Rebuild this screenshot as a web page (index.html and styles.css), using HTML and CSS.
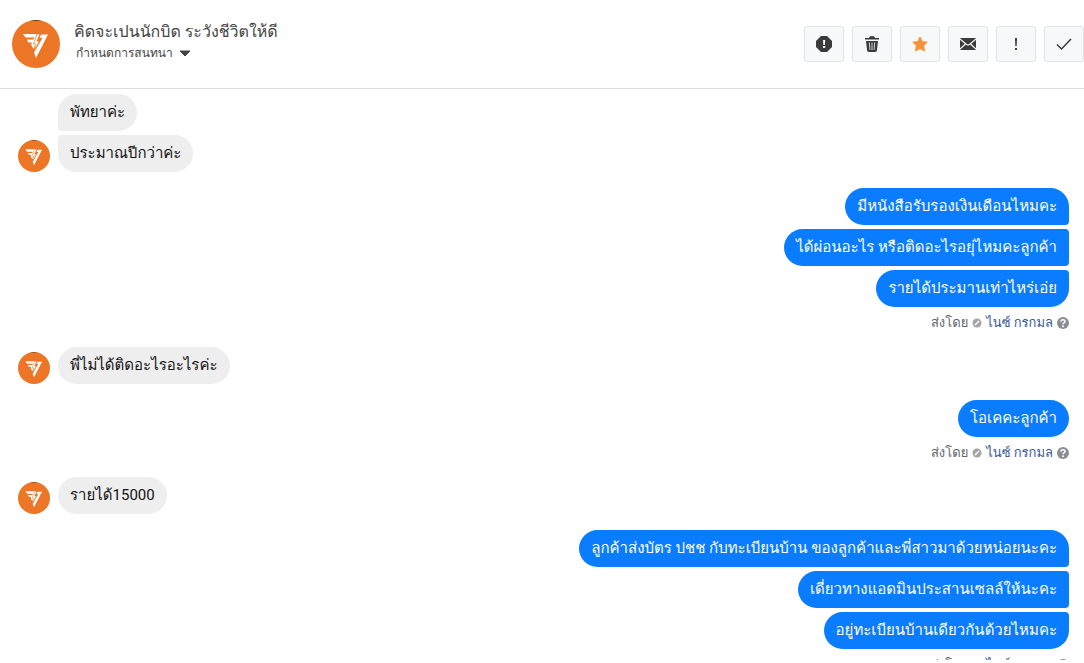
FILE: index.html
```html
<!DOCTYPE html>
<html lang="th">
<head>
    <meta charset="UTF-8">
    <meta name="viewport" content="width=device-width, initial-scale=1.0">
    <title>คิดจะเปนนักบิด ระวังชีวิตให้ดี</title>
    <link rel="stylesheet" href="styles.css">
</head>
<body>
    <!-- shared shapes -->
    <svg class="symbols" aria-hidden="true">
        <symbol id="logo" viewBox="0 0 48 48">
            <circle cx="24" cy="24" r="24" fill="#ec7526"/>
            <path d="M18 .8a24 24 0 0 1 12 0z" fill="#33231a"/>
            <path d="M11 14H27L24.500 22L21.500 29L19 24.500L20 22.500H16.500L14.500 19.500H21.500L22.200 17.500H13.500z" fill="#fff"/>
            <path d="M29 14.500H36L24 38L22 32.500L30.500 18H27.500z" fill="#fff"/>
            <path d="M28 14L25 21H27.500L22 31.500L23.500 24H21.500L25 14z" fill="#fff" stroke="#ec7526" stroke-width=".7"/>
        </symbol>
        <symbol id="help" viewBox="0 0 12 12">
            <circle cx="6" cy="6" r="6" fill="#8a8d91"/>
            <path d="M4 4.600C4 2.200 8 2.200 8 4.500C8 6 6 5.800 6 7.200" fill="none" stroke="#fff" stroke-width="1.600"/>
            <circle cx="6" cy="9.200" r="1" fill="#fff"/>
        </symbol>
        <symbol id="app" viewBox="0 0 10 10">
            <circle cx="5" cy="5" r="4.500" fill="#a5a5a5"/>
            <path d="M3 7L7 3" stroke="#fff" stroke-width="1.500"/>
        </symbol>
    </svg>

    <div class="app">
        <header class="header">
            <svg class="logo"><use href="#logo"/></svg>
            <div class="info">
                <h1>คิดจะเปนนักบิด ระวังชีวิตให้ดี</h1>
                <button type="button" class="assign">กำหนดการสนทนา
                    <svg width="12" height="7" viewBox="0 0 12 7"><path d="M1 1H11L6 6z" fill="#444" stroke="#444" stroke-linejoin="round"/></svg>
                </button>
            </div>
            <div class="actions">
                <button type="button" aria-label="สแปม">
                    <svg viewBox="0 0 16 16"><path d="M5 0H11L16 5V11L11 16H5L0 11V5z"/><path d="M7 4H9.200L8.800 9H7.400zM7 10H9.200V12H7z" fill="#fff"/></svg>
                </button>
                <button type="button" aria-label="ลบ">
                    <svg viewBox="0 0 16 16"><path d="M1 2H5Q5 0 8 0T11 2H15V3.500H1zM2 5H14L13 14Q13 16 11 16H5Q3 16 3 14z"/><path d="M5.300 6.500L6 14M8 6.500V14M10.700 6.500L10 14" stroke="#d5d5d5"/></svg>
                </button>
                <button type="button" aria-label="ติดดาว">
                    <svg viewBox="0 0 16 16"><path d="M8 1L10.200 5.600L15.200 6.200L11.600 9.700L12.500 15L8 12.500L3.500 15L4.400 9.700L.8 6.200L5.800 5.600z" fill="#f7923b" stroke="#f7923b" stroke-linejoin="round"/></svg>
                </button>
                <button type="button" aria-label="ยังไม่ได้อ่าน">
                    <svg viewBox="0 0 16 16"><rect y="2" width="16" height="12" rx="1"/><path d="M0 3L6.500 8.500Q8 9.500 9.500 8.500L16 3M0 13L5.500 8M16 13L10.500 8" fill="none" stroke="#f5f6f7" stroke-width="1.200"/></svg>
                </button>
                <button type="button" aria-label="ติดตาม">
                    <svg viewBox="0 0 16 16"><path d="M7 2H9L8.700 10H7.300zM7 12H9V14H7z"/></svg>
                </button>
                <button type="button" aria-label="เสร็จสิ้น">
                    <svg viewBox="0 0 16 16"><path d="M1 8.500L5.500 13L15 3" fill="none" stroke="#3b3b3b" stroke-width="1.500"/></svg>
                </button>
            </div>
        </header>

        <main class="chat">
            <section class="group received">
                <svg class="avatar"><use href="#logo"/></svg>
                <div class="messages">
                    <p class="bubble">พัทยาค่ะ</p>
                    <p class="bubble">ประมาณปีกว่าค่ะ</p>
                </div>
            </section>

            <section class="group sent">
                <div class="messages">
                    <p class="bubble">มีหนังสือรับรองเงินเดือนไหมคะ</p>
                    <p class="bubble">ได้ผ่อนอะไร หรือติดอะไรอยุ่ไหมคะลูกค้า</p>
                    <p class="bubble">รายได้ประมานเท่าไหร่เอ่ย</p>
                </div>
                <div class="meta">ส่งโดย <svg class="app-icon"><use href="#app"/></svg> <a href="#">ไนซ์ กรกมล</a> <svg class="help-icon"><use href="#help"/></svg></div>
            </section>

            <section class="group received">
                <svg class="avatar"><use href="#logo"/></svg>
                <div class="messages">
                    <p class="bubble">พี่ไม่ได้ติดอะไรอะไรค่ะ</p>
                </div>
            </section>

            <section class="group sent">
                <div class="messages">
                    <p class="bubble">โอเคคะลูกค้า</p>
                </div>
                <div class="meta">ส่งโดย <svg class="app-icon"><use href="#app"/></svg> <a href="#">ไนซ์ กรกมล</a> <svg class="help-icon"><use href="#help"/></svg></div>
            </section>

            <section class="group received">
                <svg class="avatar"><use href="#logo"/></svg>
                <div class="messages">
                    <p class="bubble">รายได้15000</p>
                </div>
            </section>

            <section class="group sent">
                <div class="messages">
                    <p class="bubble">ลูกค้าส่งบัตร ปชช กับทะเบียนบ้าน ของลูกค้าและพี่สาวมาด้วยหน่อยนะคะ</p>
                    <p class="bubble">เดี่ยวทางแอดมินประสานเซลล์ให้นะคะ</p>
                    <p class="bubble">อยู่ทะเบียนบ้านเดียวกันด้วยไหมคะ</p>
                </div>
                <div class="meta">ส่งโดย <svg class="app-icon"><use href="#app"/></svg> <a href="#">ไนซ์ กรกมล</a> <svg class="help-icon"><use href="#help"/></svg></div>
            </section>
        </main>
    </div>
</body>
</html>
```
FILE: styles.css
```css
* {
    box-sizing: border-box;
}
body {
    margin: 0;
    background-color: #ffffff;
    font-family: Roboto, Loma, sans-serif;
    color: #111111;
}
.symbols {
    display: none;
}
.app {
    display: flex;
    flex-direction: column;
    height: 100vh;
    padding-bottom: 3px;
}
.header {
    display: flex;
    flex-shrink: 0;
    align-items: center;
    height: 89px;
    padding-left: 12px;
    border-bottom: 1px solid #dadde1;
}
.logo {
    width: 48px;
    height: 48px;
}
.info {
    flex: 1;
    padding: 0 0 4px 14px;
}
h1 {
    margin: 0;
    font-size: 16px;
    font-weight: 500;
    line-height: 22px;
    color: #444444;
}
.assign {
    display: flex;
    align-items: center;
    gap: 6px;
    padding: 0 2px;
    border: none;
    background: none;
    font-family: inherit;
    font-size: 12px;
    line-height: 20px;
    color: #444444;
}
.actions {
    display: flex;
    gap: 8px;
}
.actions button {
    display: flex;
    align-items: center;
    justify-content: center;
    width: 40px;
    height: 36px;
    padding: 0;
    border: 1px solid #dfe2e6;
    border-radius: 3px;
    background-color: #f7f8fa;
}
.actions svg {
    width: 16px;
    height: 16px;
    fill: #3b3b3b;
}
.chat {
    display: flex;
    flex: 1;
    flex-direction: column;
    gap: 16px;
    min-height: 0;
    padding: 5px 15px 0 18px;
    overflow: hidden;
}
.group {
    display: flex;
    flex-shrink: 0;
}
.messages {
    display: flex;
    flex-direction: column;
    gap: 4px;
}
.bubble {
    margin: 0;
    padding: 0 12px;
    border-radius: 19px;
    font-size: 15px;
    line-height: 37px;
    white-space: nowrap;
}
.received {
    align-items: flex-end;
    gap: 8px;
}
.received .messages {
    align-items: flex-start;
}
.received .bubble {
    background-color: #eeeeee;
}
.received .bubble:not(:first-child) {
    border-top-left-radius: 4px;
}
.received .bubble:not(:last-child) {
    border-bottom-left-radius: 4px;
}
.avatar {
    width: 32px;
    height: 32px;
}
.sent {
    flex-direction: column;
}
.sent .messages {
    align-items: flex-end;
}
.sent .bubble {
    background-color: #0a7cff;
    color: #ffffff;
}
.sent .bubble:not(:first-child) {
    border-top-right-radius: 4px;
}
.sent .bubble:not(:last-child) {
    border-bottom-right-radius: 4px;
}
.meta {
    display: flex;
    align-items: center;
    justify-content: flex-end;
    gap: 4px;
    padding-top: 8px;
    font-size: 13px;
    line-height: 16px;
    color: #606770;
}
.meta a {
    color: #385898;
    text-decoration: none;
}
.app-icon {
    width: 10px;
    height: 10px;
}
.help-icon {
    width: 12px;
    height: 12px;
}
```
